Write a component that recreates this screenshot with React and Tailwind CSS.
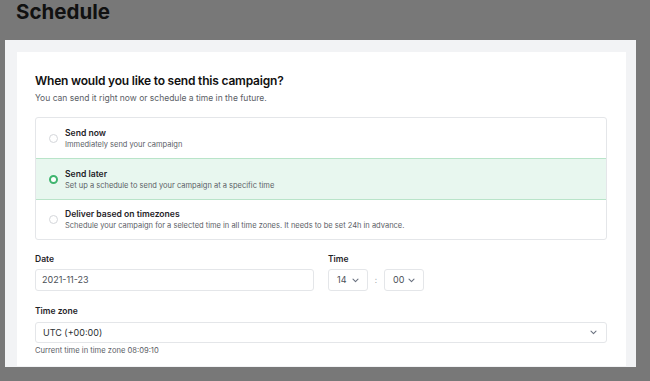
import React from "react";

function Chevron({ className = "" }) {
  return (
    <svg className={className} width="7" height="5" viewBox="0 0 7 5" fill="none">
      <path d="M1 1.2 L3.5 3.6 L6 1.2" stroke="#6b7280" strokeWidth="1.1" strokeLinecap="round" strokeLinejoin="round" />
    </svg>
  );
}

function Radio({ checked }) {
  if (checked) {
    return <div className="w-[9px] h-[9px] rounded-full border-[2.5px] border-[#3fb56f] bg-white shrink-0" />;
  }
  return <div className="w-[9px] h-[9px] rounded-full border border-[#d4d6da] bg-white shrink-0" />;
}

function Option({ title, desc, checked, className = "" }) {
  return (
    <div className={"flex items-center gap-[7px] pl-[13px] " + className}>
      <Radio checked={checked} />
      <div className="flex flex-col">
        <div className="text-[8.6px] leading-[12px] font-semibold text-[#1f2328]">{title}</div>
        <div className="text-[7.5px] leading-[11px] text-[#5b6066]">{desc}</div>
      </div>
    </div>
  );
}

export default function App() {
  return (
    <div
      className="w-[650px] h-[381px] overflow-hidden bg-[#787878] flex flex-col"
      style={{ fontFamily: "Inter, 'Noto Sans', sans-serif" }}
    >
      <div className="h-[40px] pl-4 text-[20.5px] leading-[24px] font-bold text-[#111111] shrink-0">Schedule</div>
      <div className="ml-[5px] w-[631px] h-[327px] bg-[#f2f3f5] pl-3 pt-3 pr-[10px] shrink-0">
        <div className="bg-white h-[314px] pl-[18px] pr-[19px] pt-[19px]">
          <div className="text-[12px] leading-[20px] font-semibold tracking-[-0.2px] text-[#111111]">When would you like to send this campaign?</div>
          <div className="text-[8.5px] leading-[12px] text-[#5b6066] mt-[1px]">You can send it right now or schedule a time in the future.</div>
          <div className="mt-[13px] border border-[#e4e6e9] rounded-[3px] flex flex-col">
            <Option className="h-[40px]" title="Send now" desc="Immediately send your campaign" />
            <Option
              className="h-[42px] bg-[#e8f7ef] border-y border-[#b9e4c9]"
              title="Send later"
              desc="Set up a schedule to send your campaign at a specific time"
              checked
            />
            <Option
              className="h-[39px]"
              title="Deliver based on timezones"
              desc="Schedule your campaign for a selected time in all time zones. It needs to be set 24h in advance."
            />
          </div>
          <div className="mt-[13px] flex">
            <div className="w-[279px] flex flex-col">
              <div className="text-[8.5px] leading-[12px] font-semibold text-[#1f2328]">Date</div>
              <div className="mt-[4px] h-[22px] border border-[#e4e6e9] rounded-[3px] flex items-center pl-[6px] text-[9px] text-[#4b5057]">2021-11-23</div>
            </div>
            <div className="ml-[14px] flex flex-col">
              <div className="text-[8.5px] leading-[12px] font-semibold text-[#1f2328]">Time</div>
              <div className="mt-[4px] flex items-center">
                <div className="w-[40px] h-[22px] border border-[#e4e6e9] rounded-[3px] flex items-center justify-between pl-[8px] pr-[8px] text-[9px] text-[#4b5057]">
                  <span>14</span>
                  <Chevron />
                </div>
                <div className="w-[16px] text-center text-[8px] text-[#9aa0a6]">:</div>
                <div className="w-[40px] h-[22px] border border-[#e4e6e9] rounded-[3px] flex items-center justify-between pl-[8px] pr-[8px] text-[9px] text-[#4b5057]">
                  <span>00</span>
                  <Chevron />
                </div>
              </div>
            </div>
          </div>
          <div className="mt-[14px] text-[8.5px] leading-[12px] font-semibold text-[#1f2328]">Time zone</div>
          <div className="mt-[5px] h-[21px] border border-[#e4e6e9] rounded-[3px] flex items-center justify-between pl-[7px] pr-[9px] text-[9px] text-[#2b2f33]">
            <span>UTC (+00:00)</span>
            <Chevron />
          </div>
          <div className="mt-[2px] text-[7.6px] leading-[12px] text-[#5b6066]">Current time in time zone 08:09:10</div>
        </div>
      </div>
    </div>
  );
}
